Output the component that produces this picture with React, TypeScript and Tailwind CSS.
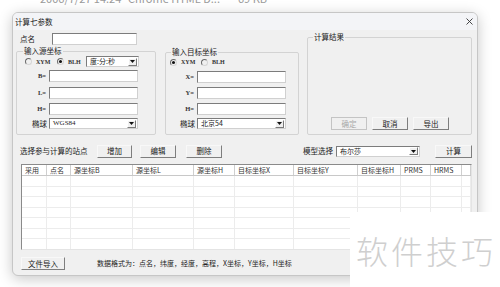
import React from 'react';

const cjk = "font-['Noto_Sans_CJK_SC',sans-serif]";
const lat = "font-['Liberation_Serif',serif]";

const Radio = ({ checked }: { checked?: boolean }) => (
    <span className="inline-flex h-[7px] w-[7px] items-center justify-center rounded-full border border-[#6a6a6a] border-r-[#d6d6d6] border-b-[#d6d6d6]">
        {checked && <span className="h-[3px] w-[3px] rounded-full bg-[#111]" />}
    </span>
);

const Field = ({ w }: { w: string }) => (
    <div className={`h-[12px] border border-[#7c7c7c] border-r-[#d0d0d0] border-b-[#d0d0d0] bg-white ${w}`} />
);

const Combo = ({ w, text, latin }: { w: string; text: string; latin?: boolean }) => (
    <div className={`flex h-[11px] items-center border border-[#7c7c7c] border-r-[#d0d0d0] border-b-[#d0d0d0] bg-white ${w}`}>
        <span className={`flex-1 pl-[3px] text-[7px] leading-none text-[#222] ${latin ? lat : cjk}`}>{text}</span>
        <span className="mr-[1px] flex h-[8px] w-[9px] items-center justify-center border border-white border-r-[#7a7a7a] border-b-[#7a7a7a] bg-[#f0f0f0]">
            <svg width="5" height="3" viewBox="0 0 5 3"><path d="M0 0h5L2.5 3z" fill="#111" /></svg>
        </span>
    </div>
);

const Btn = ({ w, label, disabled }: { w: string; label: string; disabled?: boolean }) => (
    <div
        className={`flex h-[13px] items-center justify-center border text-[7.5px] leading-none ${w} ${
            disabled
                ? 'border-[#c4c4c4] bg-[#f0f0f0] text-[#a8a8a8]'
                : 'border-[#f8f8f8] border-r-[#7e7e7e] border-b-[#7e7e7e] bg-[#f0f0f0] text-[#1a1a1a]'
        }`}
    >
        {label}
    </div>
);

const Label = ({ w, text }: { w: string; text: string }) => (
    <span className={`pr-[3px] text-right text-[6.5px] leading-none text-[#333] ${lat} font-bold ${w}`}>{text}</span>
);

// column widths of the station table
const cols = [
    { t: '采用', w: 'w-[25px]' },
    { t: '点名', w: 'w-[24px]' },
    { t: '源坐标B', w: 'w-[62px]' },
    { t: '源坐标L', w: 'w-[61px]' },
    { t: '源坐标H', w: 'w-[41px]' },
    { t: '目标坐标X', w: 'w-[59px]' },
    { t: '目标坐标Y', w: 'w-[64px]' },
    { t: '目标坐标H', w: 'w-[43px]' },
    { t: 'PRMS', w: 'w-[30px]' },
    { t: 'HRMS', w: 'w-[31px]' },
    { t: '', w: 'flex-1' },
];

const rows = [0, 1, 2, 3, 4, 5, 6];

export default function App() {
    return (
        <div className={`relative h-[287px] w-[500px] overflow-hidden bg-white ${cjk}`}>
            {/* file list line behind the dialog, mostly scrolled away */}
            <div className="h-[12px] overflow-hidden">
                <div className="-mt-[8px] flex text-[11px] leading-[12px] text-[#9a9a9a]">
                    <span className="ml-[40px] w-[88px]">2006/7/27 14:24</span>
                    <span className="w-[110px]">Chrome HTML D...</span>
                    <span>69 KB</span>
                </div>
            </div>

            {/* dialog */}
            <div className="ml-[12px] flex h-[264px] w-[466px] flex-col overflow-hidden rounded-[6px] border border-[#c6c6c6] bg-[#f0f0f0] shadow-[0_3px_14px_rgba(0,0,0,0.22)]">
                <div className="flex h-[17px] items-center justify-between bg-[#f3f4f7] pl-[2px] pr-[4px]">
                    <span className="text-[7.5px] leading-none text-[#222]">计算七参数</span>
                    <svg width="7" height="7" viewBox="0 0 7 7"><path d="M0.5 0.5l6 6M6.5 0.5l-6 6" stroke="#333" strokeWidth="0.9" /></svg>
                </div>

                {/* upper section */}
                <div className="flex pl-[3px]">
                    <div className="flex w-[140px] flex-col">
                        <div className="mt-[3px] flex h-[12px] items-center">
                            <span className="w-[36px] pl-[4px] text-[7.5px] leading-none text-[#222]">点名</span>
                            <Field w="w-[85px]" />
                        </div>
                        <div className="relative mt-[6px] h-[84px] rounded-[2px] border border-[#d3d3d3]">
                            <span className="absolute -top-[6px] left-[6px] bg-[#f0f0f0] px-[1px] text-[7.5px] leading-[10px] text-[#222]">输入源坐标</span>
                            <div className="mt-[4px] flex h-[11px] items-center pl-[8px]">
                                <Radio />
                                <span className={`ml-[4px] w-[21px] text-[6px] font-bold leading-none text-[#333] ${lat}`}>XYM</span>
                                <Radio checked />
                                <span className={`ml-[4px] w-[18px] text-[6px] font-bold leading-none text-[#333] ${lat}`}>BLH</span>
                                <Combo w="w-[53px]" text="度:分:秒" />
                            </div>
                            <div className="mt-[3px] flex items-center">
                                <Label w="w-[32px]" text="B=" />
                                <Field w="w-[89px]" />
                            </div>
                            <div className="mt-[5px] flex items-center">
                                <Label w="w-[32px]" text="L=" />
                                <Field w="w-[89px]" />
                            </div>
                            <div className="mt-[4px] flex items-center">
                                <Label w="w-[32px]" text="H=" />
                                <Field w="w-[89px]" />
                            </div>
                            <div className="mt-[3px] flex items-center">
                                <span className="w-[32px] pr-[2px] text-right text-[7.5px] leading-none text-[#222]">椭球</span>
                                <Combo w="w-[89px]" text="WGS84" latin />
                            </div>
                        </div>
                    </div>

                    <div className="relative ml-[9px] mt-[22px] h-[83px] w-[134px] rounded-[2px] border border-[#d3d3d3]">
                        <span className="absolute -top-[6px] left-[5px] bg-[#f0f0f0] px-[1px] text-[7.5px] leading-[10px] text-[#222]">输入目标坐标</span>
                        <div className="mt-[4px] flex h-[10px] items-center pl-[4px]">
                            <Radio checked />
                            <span className={`ml-[4px] w-[20px] text-[6px] font-bold leading-none text-[#333] ${lat}`}>XYM</span>
                            <Radio />
                            <span className={`ml-[4px] text-[6px] font-bold leading-none text-[#333] ${lat}`}>BLH</span>
                        </div>
                        <div className="mt-[4px] flex items-center">
                            <Label w="w-[31px]" text="X=" />
                            <Field w="w-[89px]" />
                        </div>
                        <div className="mt-[4px] flex items-center">
                            <Label w="w-[31px]" text="Y=" />
                            <Field w="w-[89px]" />
                        </div>
                        <div className="mt-[4px] flex items-center">
                            <Label w="w-[31px]" text="H=" />
                            <Field w="w-[89px]" />
                        </div>
                        <div className="mt-[3px] flex items-center">
                            <span className="w-[31px] pr-[2px] text-right text-[7.5px] leading-none text-[#222]">椭球</span>
                            <Combo w="w-[89px]" text="北京54" />
                        </div>
                    </div>

                    <div className="relative ml-[8px] mt-[7px] flex h-[98px] w-[165px] items-end gap-[5px] rounded-[2px] border border-[#d3d3d3] pb-[4px] pl-[23px]">
                        <span className="absolute -top-[6px] left-[5px] bg-[#f0f0f0] px-[1px] text-[7.5px] leading-[10px] text-[#222]">计算结果</span>
                        <Btn w="w-[36px]" label="确定" disabled />
                        <Btn w="w-[36px]" label="取消" />
                        <Btn w="w-[36px]" label="导出" />
                    </div>
                </div>

                {/* station row */}
                <div className="mt-[10px] flex h-[12px] items-center pl-[7px] pr-[5px]">
                    <span className="w-[77px] text-[7.5px] leading-none text-[#222]">选择参与计算的站点</span>
                    <Btn w="w-[35px]" label="增加" />
                    <div className="ml-[8px]"><Btn w="w-[36px]" label="编辑" /></div>
                    <div className="ml-[10px]"><Btn w="w-[36px]" label="删除" /></div>
                    <div className="flex-1" />
                    <span className="w-[33px] text-[7.5px] leading-none text-[#222]">模型选择</span>
                    <Combo w="w-[84px]" text="布尔莎" />
                    <div className="ml-[15px]"><Btn w="w-[37px]" label="计算" /></div>
                </div>

                {/* station table */}
                <div className="ml-[8px] mt-[7px] flex h-[86px] w-[451px] flex-col overflow-hidden border border-[#8a8a8a] border-r-[#e4e4e4] border-b-[#e4e4e4] bg-white">
                    <div className="flex h-[11px] shrink-0 border-b border-[#c8c8c8]">
                        {cols.map((c, i) => (
                            <div key={i} className={`flex items-center border-r border-[#cfcfcf] pl-[3px] text-[7px] leading-none text-[#333] ${c.w}`}>
                                {c.t}
                            </div>
                        ))}
                    </div>
                    {rows.map((r) => (
                        <div key={r} className="flex h-[10.5px] shrink-0 border-b border-[#ececec]">
                            {cols.map((c, i) => (
                                <div key={i} className={`border-r border-[#ececec] ${c.w}`} />
                            ))}
                        </div>
                    ))}
                </div>

                {/* bottom row */}
                <div className="ml-[8px] mt-[7px] flex items-center">
                    <Btn w="w-[44px]" label="文件导入" />
                    <span className="ml-[32px] text-[7px] leading-none text-[#222]">数据格式为：点名，纬度，经度，高程，X坐标，Y坐标，H坐标</span>
                </div>
            </div>

            {/* watermark */}
            <div className="absolute bottom-0 left-[350px] right-0 top-[212px] flex items-center bg-white pl-[6px]">
                <span className="text-[32px] font-light leading-none tracking-[3px] text-[#cfcfcf]">软件技巧</span>
            </div>
        </div>
    );
}
